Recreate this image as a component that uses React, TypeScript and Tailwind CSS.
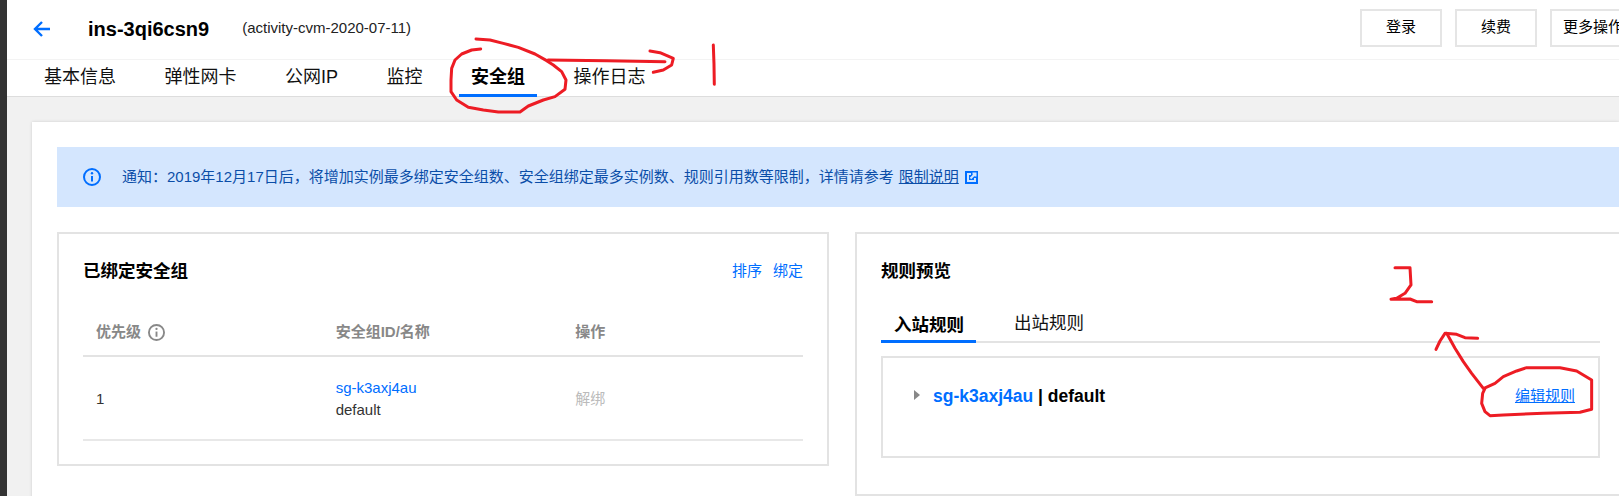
import React from 'react';

const tabs = ['基本信息', '弹性网卡', '公网IP', '监控', '安全组', '操作日志'];

const InfoIcon: React.FC<{ className: string }> = ({ className }) => (
  <svg viewBox="0 0 18 18" fill="none" stroke="currentColor" className={className}>
    <circle cx="9" cy="9" r="8" strokeWidth="2" />
    <path d="M9 8v5.5" strokeWidth="2" />
    <circle cx="9" cy="5.2" r="1.2" fill="currentColor" stroke="none" />
  </svg>
);

// hand drawn red marks from the screenshot, coordinates are 3x crop pixels
const Annotations: React.FC = () => (
  <svg
    viewBox="0 0 1619 496"
    fill="none"
    stroke="#ed1c24"
    strokeWidth="9"
    strokeLinejoin="round"
    strokeLinecap="round"
    className="absolute left-0 top-0 w-[1619px] h-[496px] pointer-events-none"
  >
    <g transform="translate(440 30) scale(0.3333)">
      <path d="M122 57L95 60L65 72L45 90L35 115L33 150L33 185L50 210L85 232L130 240L175 246L240 246L265 228L310 210L345 200L375 178L378 150L365 125L340 105L320 92L285 72L235 52L190 40L150 30L108 27" />
      <path d="M325 90L500 92L675 95" />
      <path d="M630 63L660 68L700 85L695 105L670 120L640 127" />
      <path d="M820 45L822 100L823 163" />
    </g>
    <g transform="translate(1380 255) scale(0.3333)">
      <path d="M45 38L90 38L93 90L75 115L50 130L33 133L90 132L110 140L155 140" />
      <path d="M168 283L180 258L195 235L230 238L255 248L293 250" />
      <path d="M200 235L225 280L250 320L275 355L310 400" />
      <path d="M312 400L345 385L370 365L410 348L440 338L540 338L590 348L635 375L635 463L600 472L490 475L370 480L330 482L315 470L305 445L308 415L315 400" />
    </g>
  </svg>
);

const App: React.FC = () => {
  return (
    <div className="relative flex w-[1619px] h-[496px] overflow-hidden bg-white text-black font-['Liberation_Sans','Noto_Sans_CJK_SC',sans-serif]">
      <div className="w-[7px] shrink-0 bg-[#333333]" />

      <div className="flex flex-col w-[1612px] shrink-0">
        {/* Header */}
        <div className="flex items-center h-[60px] shrink-0 pl-[26px] pb-[2px] border-b border-[#f3f3f3]">
          <svg viewBox="0 0 17 16" fill="none" stroke="#006eff" strokeWidth="2.4" className="w-[17px] h-[16px] shrink-0">
            <path d="M17 8H2M9 1L2 8l7 7" />
          </svg>
          <div className="ml-[38px] text-[20px] font-bold">ins-3qi6csn9</div>
          <div className="ml-[33px] text-[15px] text-[#222222]">(activity-cvm-2020-07-11)</div>
          <div className="ml-auto flex gap-[13px] w-[259px] shrink-0 -mt-[2px]">
            <button className="w-[82px] h-[38px] shrink-0 border-2 border-[#e5e5e5] text-[15px]">登录</button>
            <button className="w-[82px] h-[38px] shrink-0 border-2 border-[#e5e5e5] text-[15px]">续费</button>
            <button className="w-[110px] h-[38px] shrink-0 border-2 border-[#e5e5e5] text-[15px] text-left pl-[11px]">更多操作</button>
          </div>
        </div>

        {/* Tabs */}
        <div className="flex gap-[24.5px] h-[37px] shrink-0 pl-[25px] border-b border-[#dddddd]">
          {tabs.map((tab) => (
            <div
              key={tab}
              className={
                tab === '安全组'
                  ? 'h-[37px] px-3 pt-[1px] text-[18px] leading-[33px] font-bold border-b-[3px] border-[#006eff]'
                  : 'h-[37px] px-3 pt-[1px] text-[18px] leading-[33px] text-[#111111]'
              }
            >
              {tab}
            </div>
          ))}
        </div>

        {/* Body */}
        <div className="flex-1 min-h-0 bg-[#f1f1f1] pl-[25px] pt-[25px]">
          <div className="h-[400px] bg-white shadow-[0_0_3px_rgba(0,0,0,0.15)] pl-[25px] pt-[25px]">
            <div className="flex items-center h-[60px] pl-[26px] bg-[#d4e6fe] text-[#0b4ea8] text-[15px]">
              <InfoIcon className="w-[18px] h-[18px] shrink-0 text-[#006eff]" />
              <span className="ml-[21px]">通知：2019年12月17日后，将增加实例最多绑定安全组数、安全组绑定最多实例数、规则引用数等限制，详情请参考</span>
              <span className="ml-[5px] underline">限制说明</span>
              <svg viewBox="0 0 13 13" className="ml-[6px] w-[13px] h-[13px] shrink-0">
                <rect width="13" height="13" fill="#006eff" />
                <path d="M6 3H3v7h7V7M5.5 7.5L10 3M7.5 2.5h3v3" fill="none" stroke="#d4e6fe" strokeWidth="2" />
              </svg>
            </div>

            <div className="flex items-start gap-[26px] mt-[25px]">
              {/* Bound security groups */}
              <div className="w-[772px] h-[234px] shrink-0 border-2 border-[#e3e3e3] px-[24px] pt-[24px]">
                <div className="flex items-center justify-between h-[26px]">
                  <div className="text-[17.5px] font-bold">已绑定安全组</div>
                  <div className="flex gap-[11px] text-[15px] text-[#006eff]">
                    <span>排序</span>
                    <span>绑定</span>
                  </div>
                </div>
                <div className="grid grid-cols-3 items-center h-[49px] mt-[24px] pt-[2px] border-b-2 border-[#e3e3e3] pl-[13px] text-[15px] font-bold text-[#888888]">
                  <div className="flex items-center gap-[7px]">
                    优先级
                    <InfoIcon className="w-[17px] h-[17px] font-normal" />
                  </div>
                  <div className="pl-[4px]">安全组ID/名称</div>
                  <div className="pl-[8px]">操作</div>
                </div>
                <div className="grid grid-cols-3 items-center h-[84px] pt-[2px] border-b-2 border-[#e8e8e8] pl-[13px] text-[15px] text-[#333333]">
                  <div>1</div>
                  <div className="pl-[4px] leading-[22px]">
                    <div className="text-[#006eff]">sg-k3axj4au</div>
                    <div>default</div>
                  </div>
                  <div className="pl-[8px] text-[#bbbbbb]">解绑</div>
                </div>
              </div>

              {/* Rule preview */}
              <div className="w-[800px] h-[264px] shrink-0 border-2 border-[#e3e3e3] pl-[24px] pt-[24px]">
                <div className="h-[26px] text-[17.5px] font-bold">规则预览</div>
                <div className="flex w-[719px] h-[59px] items-end border-b-2 border-[#e3e3e3]">
                  <div className="w-[95px] h-[38px] pl-[13px] pt-[7px] -mb-[2px] text-[17.5px] font-bold border-b-[3px] border-[#006eff]">入站规则</div>
                  <div className="ml-[38px] h-[38px] pt-[7px] text-[17.5px] text-[#111111]">出站规则</div>
                </div>
                <div className="flex items-start w-[719px] h-[102px] mt-[13px] border-2 border-[#e3e3e3] pl-[31px] pr-[23px] pt-[26px]">
                  <div className="w-0 h-0 mt-[6px] border-y-[5px] border-y-transparent border-l-[6px] border-l-[#888888]" />
                  <div className="ml-[13px] text-[17.5px] leading-[24px] font-bold">
                    <span className="text-[#006eff]">sg-k3axj4au</span> | default
                  </div>
                  <div className="ml-auto text-[15px] leading-[24px] text-[#006eff] underline">编辑规则</div>
                </div>
              </div>
            </div>
          </div>
        </div>
      </div>

      <Annotations />
    </div>
  );
};

export default App;
